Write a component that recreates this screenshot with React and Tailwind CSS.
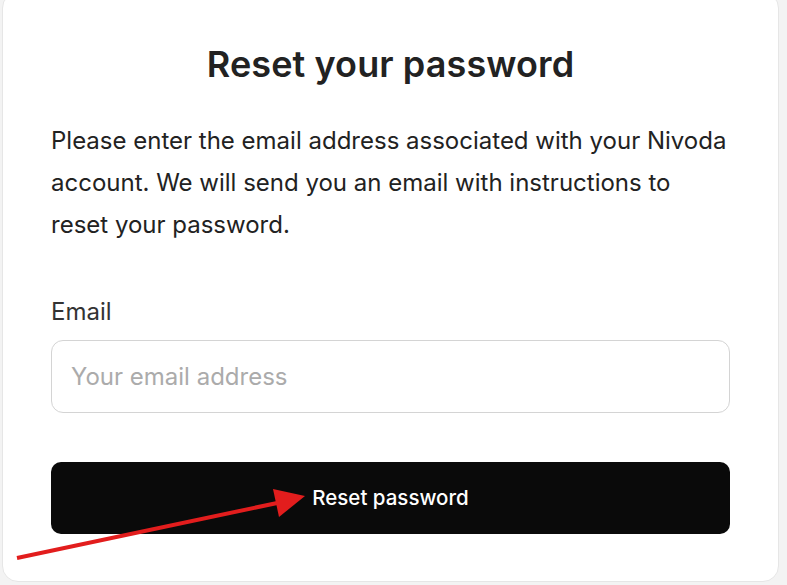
import React from 'react';

const Arrow = () => (
  <svg className="absolute left-0 top-0 pointer-events-none" width="787" height="585" viewBox="0 0 787 585">
    <line x1="17" y1="558" x2="282" y2="502" stroke="#e21d1d" strokeWidth="4" />
    <polygon points="273,489 305,496 279,517" fill="#e21d1d" />
  </svg>
);

const App = () => {
  return (
    <div className="relative w-[787px] h-[585px] overflow-hidden bg-[#f3f3f3]" style={{ fontFamily: 'Inter, "Noto Sans", sans-serif' }}>
      <div className="ml-[2px] -mt-[8px] w-[777px] h-[590px] bg-white rounded-[16px] border border-[#e6e6e6] px-[48px] pt-[47px]">
        <h1 className="text-center text-[36px] font-semibold text-[#222] leading-[48px] tracking-[0.1px]">
          Reset your password
        </h1>
        <p className="mt-[32px] text-[24px] leading-[42px] text-[#222]">
          Please enter the email address associated with your Nivoda account. We will send you an email with instructions to reset your password.
        </p>
        <label className="block mt-[51px] text-[24px] leading-[30px] text-[#333]">Email</label>
        <input
          type="email"
          placeholder="Your email address"
          className="mt-[13px] w-full h-[73px] rounded-[12px] border border-[#d4d4d4] px-[19px] text-[24px] text-[#222] placeholder:text-[#ababab] outline-none"
        />
        <button className="mt-[49px] w-full h-[72px] rounded-[10px] bg-[#0a0a0a] text-white text-[20.5px] font-medium">
          Reset password
        </button>
      </div>
      <Arrow />
    </div>
  );
};

export default App;
